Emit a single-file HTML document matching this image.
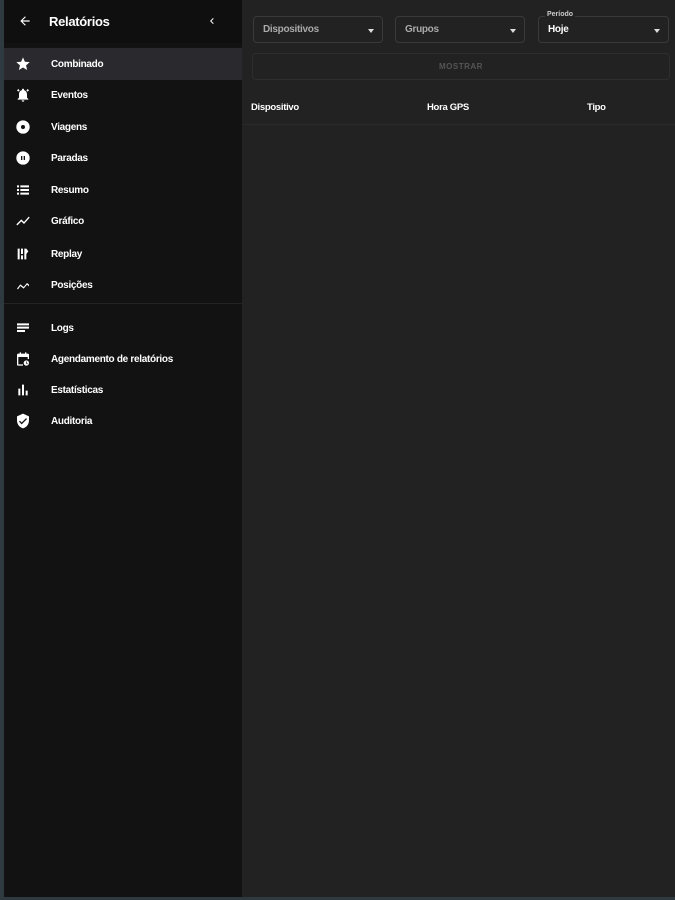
<!DOCTYPE html>
<html><head><meta charset="utf-8"><style>
*{margin:0;padding:0;box-sizing:border-box}
body{width:675px;height:900px;background:#2f3a40;font-family:"Liberation Sans",sans-serif;overflow:hidden;position:relative}
#side{position:absolute;left:4px;top:0;width:238px;height:897px;background:#121212}
#main{position:absolute;left:242px;top:0;width:433px;height:897px;background:#222}
.hdr{position:absolute;left:0;top:0;width:238px;height:43px;background:#0f0f0f}
.hdr .t{position:absolute;left:45px;top:14px;color:#fff;font-size:13px;font-weight:bold;letter-spacing:-0.3px}
.item{position:absolute;left:0;width:238px;height:32px}
.item.sel{background:#29292e}
.item svg{position:absolute;left:11px;top:8px;width:16px;height:16px;fill:#fff}
.item span{position:absolute;left:47px;top:11px;color:#fff;font-size:10px;font-weight:bold;letter-spacing:-0.3px}
.div{position:absolute;left:0;top:303px;width:238px;height:1px;background:#242424}
.sel2{position:absolute;top:16px;height:27px;border:1px solid #3a3a3a;border-radius:4px}
.sel2 span{position:absolute;left:9px;top:7px;color:#aaa;font-size:10px;font-weight:bold;letter-spacing:-0.3px}
.sel2 i{position:absolute;right:8px;top:12px;width:0;height:0;border-left:3px solid transparent;border-right:3px solid transparent;border-top:4px solid #ddd}
.btn{position:absolute;left:10px;top:53px;width:418px;height:27px;border:1px solid #2e2e2e;border-radius:4px;color:#555;font-size:8px;font-weight:bold;text-align:center;line-height:25px;letter-spacing:0.5px}
.th{position:absolute;top:102px;color:#fff;font-size:9.5px;font-weight:bold;letter-spacing:-0.3px}
</style></head><body>
<div id="side">
 <div class="hdr">
  <svg style="position:absolute;left:14px;top:14px" width="14" height="14" viewBox="0 0 24 24"><path d="M20 11H7.8l5.6-5.6L12 4l-8 8 8 8 1.4-1.4L7.8 13H20z" fill="#fff"/></svg>
  <div class="t">Relatórios</div>
  <svg style="position:absolute;left:202px;top:15px" width="12" height="12" viewBox="0 0 24 24"><path d="M15.4 7.4 14 6l-6 6 6 6 1.4-1.4L10.8 12z" fill="#fff"/></svg>
 </div>
 <div class="item sel" style="top:48px"><svg viewBox="0 0 24 24"><path d="M12 17.3 18.2 21l-1.6-7L22 9.2l-7.2-.6L12 2 9.2 8.6 2 9.2 7.5 14l-1.7 7z"/></svg><span>Combinado</span></div>
 <div class="item" style="top:79px"><svg viewBox="0 0 24 24"><path d="M12 22a2 2 0 0 0 2-2h-4a2 2 0 0 0 2 2zm6-6v-5c0-3-1.6-5.6-4.5-6.3V4a1.5 1.5 0 0 0-3 0v.7C7.6 5.4 6 8 6 11v5l-2 2v1h16v-1zM3 5l2-2 2 2-2 2zm14 0 2-2 2 2-2 2z"/></svg><span>Eventos</span></div>
 <div class="item" style="top:111px"><svg viewBox="0 0 24 24"><circle cx="12" cy="12" r="10"/><circle cx="12" cy="12" r="3" fill="#121212"/></svg><span>Viagens</span></div>
 <div class="item" style="top:142px"><svg viewBox="0 0 24 24"><circle cx="12" cy="12" r="10"/><rect x="9" y="9" width="2" height="6" fill="#121212"/><rect x="13" y="9" width="2" height="6" fill="#121212"/></svg><span>Paradas</span></div>
 <div class="item" style="top:174px"><svg viewBox="0 0 24 24"><path d="M3 5h3v3H3zm5 0h13v3H8zM3 10.5h3v3H3zm5 0h13v3H8zM3 16h3v3H3zm5 0h13v3H8z"/></svg><span>Resumo</span></div>
 <div class="item" style="top:205px"><svg viewBox="0 0 24 24"><path d="M3.5 18.5 9.5 12.5l4 4L22 6.9 20.6 5.5l-7.1 8-4-4L2 17z"/></svg><span>Gráfico</span></div>
 <div class="item" style="top:238px"><svg viewBox="0 0 24 24"><path d="M4 4h3v16H4zm5 0h3v8H9zm5 0h3l3 4-3 4v8h-3zm-5 10h3v6H9z"/></svg><span>Replay</span></div>
 <div class="item" style="top:269px"><svg viewBox="0 0 24 24"><path d="M3 17.5 8 11l5 4 5-6 3 2.5v2.5L18 11.5l-5 6-5-4-3.5 5z"/></svg><span>Posições</span></div>
 <div class="div"></div>
 <div class="item" style="top:312px"><svg viewBox="0 0 24 24"><path d="M3 5h18v3H3zm0 5h18v3H3zm0 5h12v3H3z"/></svg><span>Logs</span></div>
 <div class="item" style="top:343px"><svg viewBox="0 0 24 24"><path d="M7 2h2v2h6V2h2v2h2a2 2 0 0 1 2 2v6h-2V9H5v11h7v2H5a2 2 0 0 1-2-2V6a2 2 0 0 1 2-2h2zm10 12a4 4 0 1 1 0 8 4 4 0 0 1 0-8zm-.5 1.5v3l2.2 1.3.5-.8-1.7-1V15.5z"/></svg><span>Agendamento de relatórios</span></div>
 <div class="item" style="top:374px"><svg viewBox="0 0 24 24"><path d="M5 10h3v10H5zm5.5-6h3v16h-3zM16 13h3v7h-3z"/></svg><span>Estatísticas</span></div>
 <div class="item" style="top:405px"><svg viewBox="0 0 24 24"><path d="M12 1 3 5v6c0 5.6 3.8 10.7 9 12 5.2-1.3 9-6.4 9-12V5zm-2 16-4-4 1.4-1.4 2.6 2.6 6.6-6.6L18 9z"/></svg><span>Auditoria</span></div>
</div>
<div id="main">
 <div class="sel2" style="left:11px;width:130px"><span>Dispositivos</span><i></i></div>
 <div class="sel2" style="left:153px;width:130px"><span>Grupos</span><i></i></div>
 <div class="sel2" style="left:296px;width:131px"><span style="color:#fff">Hoje</span><i></i>
  <div style="position:absolute;left:6px;top:-6px;background:#222;padding:0 2px;color:#ccc;font-size:7px;font-weight:bold">Período</div></div>
 <div class="btn">MOSTRAR</div>
 <div class="th" style="left:9px">Dispositivo</div>
 <div class="th" style="left:185px">Hora GPS</div>
 <div class="th" style="left:345px">Tipo</div>
 <div style="position:absolute;left:0;top:124px;width:433px;height:1px;background:#2a2a2a"></div>
</div>
</body></html>
